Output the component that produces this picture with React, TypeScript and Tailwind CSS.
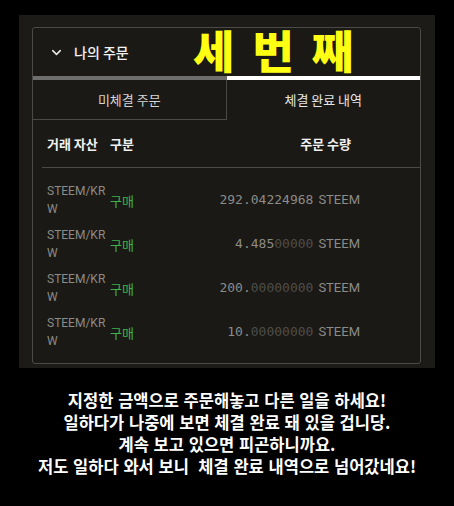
import { ChevronDown } from "lucide-react";

const rows = [
  { main: "292.04224968", tail: "" },
  { main: "4.485", tail: "00000" },
  { main: "200.", tail: "00000000" },
  { main: "10.", tail: "00000000" },
];

const App = () => {
  return (
    <div className="w-[454px] h-[506px] bg-black overflow-hidden" style={{ fontFamily: "Roboto, 'Noto Sans CJK KR', sans-serif" }}>
      {/* Panel */}
      <div className="ml-[19px] mt-[15px] w-[416px] h-[353px] bg-[#1c1b18] pl-[13px] pr-[14px] pt-[12px]">
        <div className="border border-[#4b4a47] rounded-[3px] bg-[#1a1915]">
          {/* Header */}
          <div className="relative h-[48px] flex items-center pl-[16px] gap-[10px]">
            <ChevronDown className="w-[15px] h-[15px] text-[#e8e8e8]" strokeWidth={2.5} />
            <span className="text-[14px] font-medium text-[#f2f2f2]" style={{ fontFamily: "'Noto Sans CJK KR', sans-serif" }}>나의 주문</span>
            <div
              className="absolute left-[160px] top-[-5px] flex gap-[18px] text-[45px] font-black text-[#ffff14] leading-[54px]"
              style={{ fontFamily: "'Noto Sans CJK KR', sans-serif" }}
            >
              <span>세</span>
              <span>번</span>
              <span>째</span>
            </div>
          </div>

          {/* Tabs */}
          <div className="grid grid-cols-2" style={{ fontFamily: "'Noto Sans CJK KR', sans-serif" }}>
            <div>
              <div className="h-[4px] bg-[#6e6e6c]" />
              <div className="h-[40px] flex items-center justify-center border-r border-b border-[#4b4a47] text-[13px] text-[#d6d6d6]">미체결 주문</div>
            </div>
            <div>
              <div className="h-[4px] bg-white" />
              <div className="h-[40px] flex items-center justify-center text-[13px] text-[#e6e6e6]">체결 완료 내역</div>
            </div>
          </div>

          {/* Table header */}
          <div
            className="h-[48px] ml-[9px] border-b border-[#4b4a47] flex items-center pl-[5px] text-[13px] font-bold text-[#f0f0f0]"
            style={{ fontFamily: "'Noto Sans CJK KR', sans-serif" }}
          >
            <span className="w-[63px]">거래 자산</span>
            <span>구분</span>
            <span className="flex-1 text-right pr-[69px]">주문 수량</span>
          </div>

          {/* Rows */}
          <div className="pt-[14px] pb-[13px] flex flex-col gap-[8px]">
            {rows.map((r, i) => (
              <div key={i} className="h-[36px] flex items-center pl-[14px]">
                <div className="w-[63px] pr-[3px] text-[12px] leading-[18px] text-[#8c8b88] break-all">STEEM/KRW</div>
                <div className="text-[13px] text-[#3cb44b] pt-[1px]" style={{ fontFamily: "'Noto Sans CJK KR', sans-serif" }}>구매</div>
                <div className="flex-1 text-right pr-[60px] text-[13px] text-[#8c8b88] whitespace-nowrap">
                  <span style={{ fontFamily: "'DejaVu Sans Mono', monospace" }}>
                    {r.main}
                    <span className="text-[#4e4d4a]">{r.tail}</span>
                  </span>
                  <span className="ml-[5px]">STEEM</span>
                </div>
              </div>
            ))}
          </div>
        </div>
      </div>

      {/* Caption */}
      <div
        className="mt-[21px] text-center text-white font-bold text-[16.5px] leading-[22px] whitespace-pre [word-spacing:1px]"
        style={{ fontFamily: "'Noto Sans CJK KR', sans-serif" }}
      >
        <div>지정한 금액으로 주문해놓고 다른 일을 하세요!</div>
        <div>일하다가 나중에 보면 체결 완료 돼 있을 겁니당.</div>
        <div>계속 보고 있으면 피곤하니까요.</div>
        <div>저도 일하다 와서 보니  체결 완료 내역으로 넘어갔네요!</div>
      </div>
    </div>
  );
};

export default App;
